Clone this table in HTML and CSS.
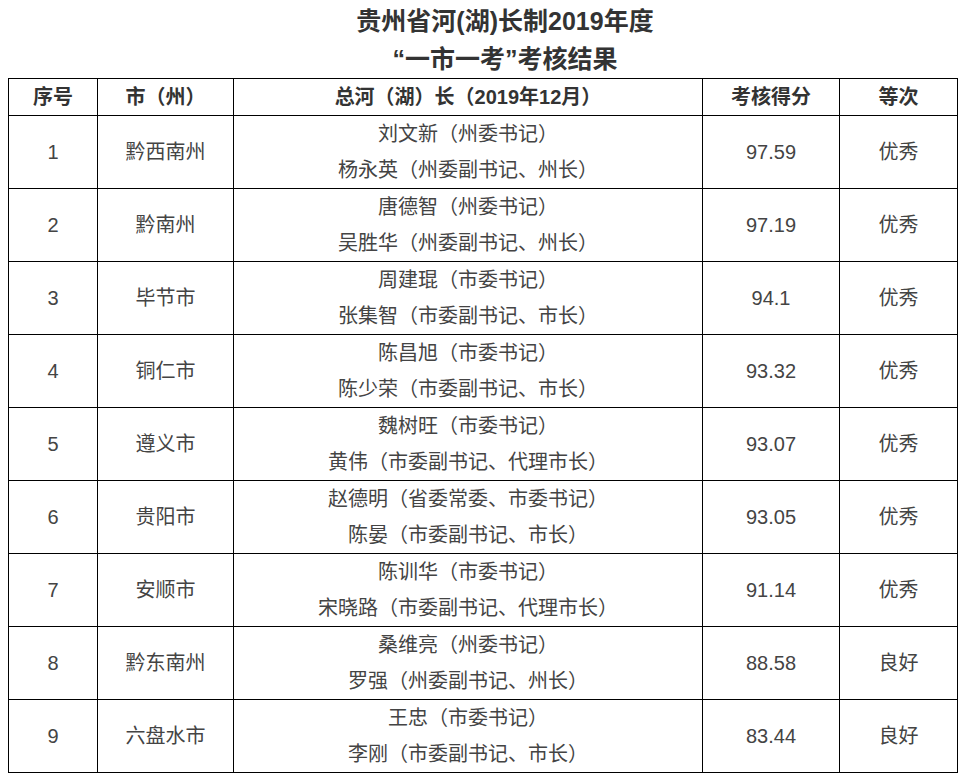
FILE: index.html
```html
<!DOCTYPE html>
<html lang="zh-CN">
<head>
<meta charset="utf-8">
<title>贵州省河(湖)长制2019年度“一市一考”考核结果</title>
<link rel="stylesheet" href="styles.css">
</head>
<body>
<div class="page">
  <h1 class="title">贵州省河(湖)长制2019年度<br>“一市一考”考核结果</h1>
  <table class="result">
    <colgroup>
      <col class="c1"><col class="c2"><col class="c3"><col class="c4"><col class="c5">
    </colgroup>
    <thead>
      <tr><th>序号</th><th>市（州）</th><th>总河（湖）长（2019年12月）</th><th>考核得分</th><th>等次</th></tr>
    </thead>
    <tbody>
      <tr><td>1</td><td>黔西南州</td><td><p>刘文新（州委书记）</p><p>杨永英（州委副书记、州长）</p></td><td>97.59</td><td>优秀</td></tr>
      <tr><td>2</td><td>黔南州</td><td><p>唐德智（州委书记）</p><p>吴胜华（州委副书记、州长）</p></td><td>97.19</td><td>优秀</td></tr>
      <tr><td>3</td><td>毕节市</td><td><p>周建琨（市委书记）</p><p>张集智（市委副书记、市长）</p></td><td>94.1</td><td>优秀</td></tr>
      <tr><td>4</td><td>铜仁市</td><td><p>陈昌旭（市委书记）</p><p>陈少荣（市委副书记、市长）</p></td><td>93.32</td><td>优秀</td></tr>
      <tr><td>5</td><td>遵义市</td><td><p>魏树旺（市委书记）</p><p>黄伟（市委副书记、代理市长）</p></td><td>93.07</td><td>优秀</td></tr>
      <tr><td>6</td><td>贵阳市</td><td><p>赵德明（省委常委、市委书记）</p><p>陈晏（市委副书记、市长）</p></td><td>93.05</td><td>优秀</td></tr>
      <tr><td>7</td><td>安顺市</td><td><p>陈训华（市委书记）</p><p>宋晓路（市委副书记、代理市长）</p></td><td>91.14</td><td>优秀</td></tr>
      <tr><td>8</td><td>黔东南州</td><td><p>桑维亮（州委书记）</p><p>罗强（州委副书记、州长）</p></td><td>88.58</td><td>良好</td></tr>
      <tr><td>9</td><td>六盘水市</td><td><p>王忠（市委书记）</p><p>李刚（市委副书记、市长）</p></td><td>83.44</td><td>良好</td></tr>
    </tbody>
  </table>
</div>
</body>
</html>
```
FILE: styles.css
```css
html, body {
  margin: 0;
  padding: 0;
  background: #fff;
}
body {
  font-family: "Liberation Sans", "Noto Sans CJK SC", sans-serif;
  color: #333;
}
.page {
  padding: 2px 0 0 8px;
}
.title {
  margin: 0;
  width: 902px;
  padding-left: 46px;
  text-align: center;
  font-size: 25px;
  line-height: 38px;
  font-weight: bold;
  color: #333;
}
.result {
  border-collapse: collapse;
  width: 949px;
  table-layout: fixed;
  font-size: 20px;
}
.c1 { width: 89px; }
.c2 { width: 136px; }
.c3 { width: 469px; }
.c4 { width: 137px; }
.c5 { width: 118px; }
.result th,
.result td {
  border: 1px solid #000;
  padding: 0;
  text-align: center;
  vertical-align: middle;
  line-height: 36px;
}
.result th {
  font-weight: bold;
  height: 36px;
  color: #333;
}
.result td {
  height: 72px;
  color: #444;
}
.result td p {
  margin: 0;
  line-height: 36px;
}
```
